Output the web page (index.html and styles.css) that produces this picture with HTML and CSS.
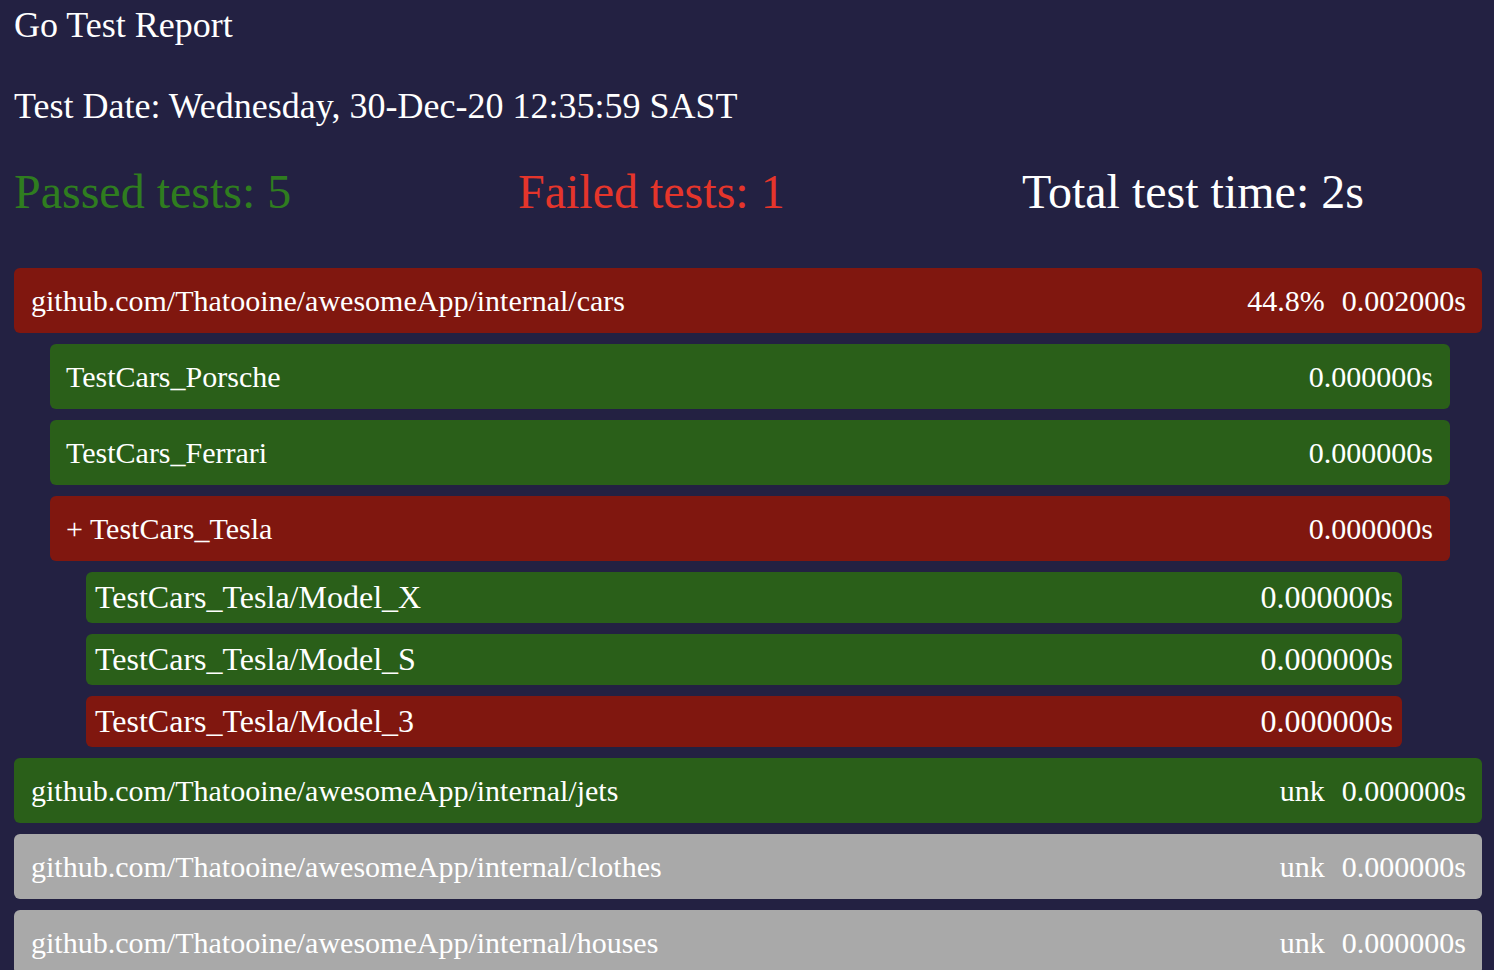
FILE: index.html
```html
<!DOCTYPE html>
<html lang="en">
<head>
<meta charset="utf-8">
<title>Go Test Report</title>
<link rel="stylesheet" href="styles.css">
</head>
<body>
<h1 class="title">Go Test Report</h1>
<p class="date">Test Date: Wednesday, 30-Dec-20 12:35:59 SAST</p>
<div class="summary">
  <div class="passed">Passed tests: 5</div>
  <div class="failed">Failed tests: 1</div>
  <div class="total">Total test time: 2s</div>
</div>
<div class="list">
  <div class="row lvl0 fail"><span class="name">github.com/Thatooine/awesomeApp/internal/cars</span><span class="meta"><span>44.8%</span><span>0.002000s</span></span></div>
  <div class="row lvl1 pass"><span class="name">TestCars_Porsche</span><span class="meta"><span>0.000000s</span></span></div>
  <div class="row lvl1 pass"><span class="name">TestCars_Ferrari</span><span class="meta"><span>0.000000s</span></span></div>
  <div class="row lvl1 fail"><span class="name">+ TestCars_Tesla</span><span class="meta"><span>0.000000s</span></span></div>
  <div class="row lvl2 pass"><span class="name">TestCars_Tesla/Model_X</span><span class="meta"><span>0.000000s</span></span></div>
  <div class="row lvl2 pass"><span class="name">TestCars_Tesla/Model_S</span><span class="meta"><span>0.000000s</span></span></div>
  <div class="row lvl2 fail"><span class="name">TestCars_Tesla/Model_3</span><span class="meta"><span>0.000000s</span></span></div>
  <div class="row lvl0 pass"><span class="name">github.com/Thatooine/awesomeApp/internal/jets</span><span class="meta"><span>unk</span><span>0.000000s</span></span></div>
  <div class="row lvl0 skip"><span class="name">github.com/Thatooine/awesomeApp/internal/clothes</span><span class="meta"><span>unk</span><span>0.000000s</span></span></div>
  <div class="row lvl0 skip"><span class="name">github.com/Thatooine/awesomeApp/internal/houses</span><span class="meta"><span>unk</span><span>0.000000s</span></span></div>
</div>
</body>
</html>
```
FILE: styles.css
```css
html, body {
  margin: 0;
  padding: 0;
}
body {
  background: #232142;
  color: #ffffff;
  font-family: "Liberation Serif", "Times New Roman", serif;
  padding: 0 12px 40px 14px;
  overflow: hidden;
}
.title {
  margin: 5px 0 0 0;
  font-size: 36px;
  font-weight: normal;
  line-height: 40px;
}
.date {
  margin: 41px 0 0 0;
  font-size: 36px;
  line-height: 40px;
}
.summary {
  margin-top: 38px;
  display: grid;
  grid-template-columns: 504px 504px auto;
  font-size: 48px;
  line-height: 56px;
}
.passed { color: #2f7d1f; }
.failed { color: #e5352b; }
.total { color: #ffffff; }

.list {
  margin-top: 48px;
  display: flex;
  flex-direction: column;
  gap: 11px;
}
.row {
  display: flex;
  align-items: center;
  justify-content: space-between;
  box-sizing: border-box;
  border-radius: 6px;
  white-space: nowrap;
}
.meta {
  display: flex;
  gap: 17px;
}
.lvl0 {
  height: 65px;
  font-size: 30px;
  padding: 0 16px 0 17px;
}
.lvl1 {
  height: 65px;
  font-size: 30px;
  margin: 0 32px 0 36px;
  padding: 0 17px 0 16px;
}
.lvl2 {
  height: 51px;
  font-size: 32px;
  margin: 0 80px 0 72px;
  padding: 0 9px 0 9px;
}
.fail { background: #80170f; }
.pass { background: #2a5f19; }
.skip { background: #a9a9a9; }
```
